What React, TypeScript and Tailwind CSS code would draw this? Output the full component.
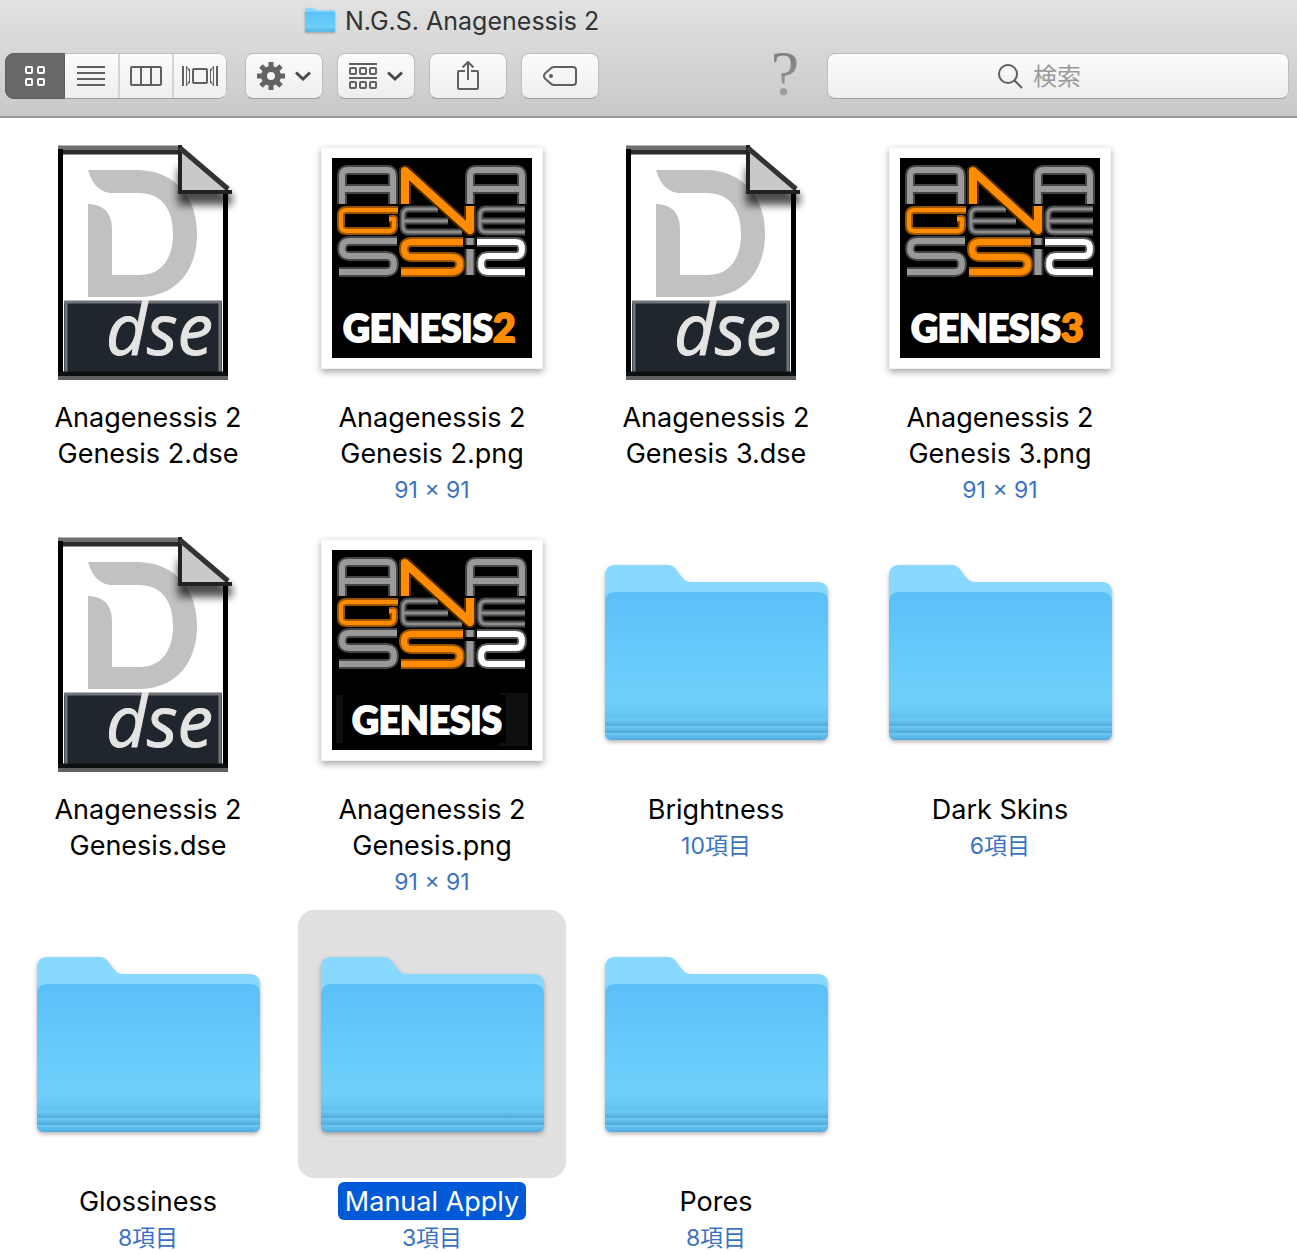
import { useState } from 'react';

type Kind = 'dse' | 'png' | 'folder';

interface Item {
  lines: string[];
  kind: Kind;
  info?: string;
  digit?: string;
}

const items: Item[] = [
  { lines: ['Anagenessis 2', 'Genesis 2.dse'], kind: 'dse' },
  { lines: ['Anagenessis 2', 'Genesis 2.png'], kind: 'png', info: '91 × 91', digit: '2' },
  { lines: ['Anagenessis 2', 'Genesis 3.dse'], kind: 'dse' },
  { lines: ['Anagenessis 2', 'Genesis 3.png'], kind: 'png', info: '91 × 91', digit: '3' },
  { lines: ['Anagenessis 2', 'Genesis.dse'], kind: 'dse' },
  { lines: ['Anagenessis 2', 'Genesis.png'], kind: 'png', info: '91 × 91' },
  { lines: ['Brightness'], kind: 'folder', info: '10項目' },
  { lines: ['Dark Skins'], kind: 'folder', info: '6項目' },
  { lines: ['Glossiness'], kind: 'folder', info: '8項目' },
  { lines: ['Manual Apply'], kind: 'folder', info: '3項目' },
  { lines: ['Pores'], kind: 'folder', info: '8項目' },
];

const FolderIcon = ({ className }: { className: string }) => (
  <svg viewBox="0 0 223 175" preserveAspectRatio="none" className={className} aria-hidden="true">
    <defs>
      <linearGradient id="folderFront" x1="0" y1="0" x2="0" y2="1">
        <stop offset="0" stopColor="#5bc0f8" />
        <stop offset="0.45" stopColor="#67cafa" />
        <stop offset="0.75" stopColor="#70d0fa" />
        <stop offset="0.86" stopColor="#62c1f0" />
        <stop offset="1" stopColor="#62c1f0" />
      </linearGradient>
      <linearGradient id="folderStripe" x1="0" y1="0" x2="0" y2="1">
        <stop offset="0" stopColor="#72c8f3" />
        <stop offset="1" stopColor="#4cacdf" />
      </linearGradient>
    </defs>
    <path d="M0 40V11Q0 0 11 0H63C74 0 74 17 86 17H212Q223 17 223 28V40Z" fill="#89d8ff" />
    <path d="M0 37Q0 27 11 27H212Q223 27 223 37V168Q223 175 216 175H7Q0 175 0 168Z" fill="url(#folderFront)" />
    <path d="M0 154H223V161H0Z" fill="url(#folderStripe)" />
    <path d="M0 161H223V168H0Z" fill="url(#folderStripe)" />
    <path d="M0 168H223Q223 175 216 175H7Q0 175 0 168Z" fill="url(#folderStripe)" />
  </svg>
);

const DseIcon = () => (
  <svg width="180" height="240" viewBox="0 -5 180 240" aria-hidden="true">
    <defs>
      <filter id="foldShadow" x="-50%" y="-50%" width="200%" height="200%">
        <feGaussianBlur stdDeviation="4" />
      </filter>
    </defs>
    <path d="M0 1H124L170 45V235H0Z" fill="#fff" />
    <path d="M30 25H82C118 27 139 52 139 89C139 126 118 150 85 152H30V59Q54 60 54 84V130H82C104 130 115 112 115 90C115 65 105 48 80 48H52Q36 46 30 25Z" fill="#c1c1c1" />
    <path d="M120 22V60H174V50Z" fill="#000" opacity="0.7" filter="url(#foldShadow)" />
    <path d="M6 156H164V230H6Z" fill="#20262d" />
    <path d="M6 157H164M8 157V228M162 157V228" stroke="#70757a" strokeWidth="3" fill="none" />
    <path d="M0 2.5H124" stroke="#707070" strokeWidth="4" />
    <path d="M0 7H124" stroke="#2b2b2b" strokeWidth="5" />
    <path d="M2.5 4V231M167.5 44V231" stroke="#000" strokeWidth="5" />
    <path d="M0 229H170" stroke="#0c0f12" strokeWidth="5" />
    <path d="M0 233H170" stroke="#606060" strokeWidth="4" />
    <path d="M122 3V47H171Z" fill="#c9c9c9" />
    <path d="M122 0V47H174" stroke="#222" strokeWidth="4" fill="none" />
    <path d="M122 3L170 44" stroke="#333" strokeWidth="5" />
    <text x="48" y="210" fill="#e4e4e4" stroke="#e4e4e4" strokeWidth="1" fontFamily="'Open Sans', sans-serif" fontStyle="italic" fontSize="71">dse</text>
  </svg>
);

interface StrokeProps {
  d: string;
  color: string;
  edge: string;
  width: number;
}

const LogoStroke = ({ d, color, edge, width }: StrokeProps) => (
  <g fill="none" strokeLinejoin="round">
    <path d={d} stroke={edge} strokeWidth={width + 4} />
    <path d={d} stroke={color} strokeWidth={width} />
  </g>
);

const PngThumb = ({ digit }: { digit?: string }) => (
  <div className="mb-1 border border-black/5 bg-white p-[10px] shadow-[0_3px_7px_rgba(0,0,0,0.35)]">
    <svg width="200" height="200" viewBox="0 0 200 200" aria-hidden="true">
      <path d="M0 0H200V200H0Z" fill="#000" />
      <LogoStroke d="M10 46V18Q10 12 16 12H55Q61 12 61 18V46M10 31H61" color="#999" edge="#444" width={6} />
      <LogoStroke d="M138 46V18Q138 12 144 12H184Q190 12 190 18V46M138 31H190" color="#999" edge="#444" width={6} />
      <LogoStroke d="M65 83H18Q10 83 10 91Q10 98 18 98H54Q62 98 62 106Q62 114 54 114H7" color="#999" edge="#444" width={6} />
      <LogoStroke d="M106 51H77Q71 51 71 57V68Q71 74 77 74H130M71 63H116" color="#8c8c8c" edge="#484848" width={3} />
      <LogoStroke d="M193 51H154Q148 51 148 57V68Q148 74 154 74H193M148 63H193" color="#8c8c8c" edge="#484848" width={3} />
      <LogoStroke d="M66 52H15Q9 52 9 57V68Q9 73 15 73H57Q62 73 62 68V61H57" color="#ff8c00" edge="#9a5500" width={4} />
      <LogoStroke d="M131 84H80Q72 84 72 91Q72 99 80 99H119Q128 99 128 106Q128 114 119 114H69" color="#ff8c00" edge="#9a5500" width={6} />
      <LogoStroke d="M73 46V13L138 72V48" color="#ff8c00" edge="#4a2a00" width={8} />
      <LogoStroke d="M138 80V87M138 91V117" color="#999" edge="#333" width={7} />
      <LogoStroke d="M145 84H184Q190 84 190 91Q190 98 184 98H156Q149 98 149 106Q149 114 156 114H193" color="#fff" edge="#555" width={6} />
      {!digit && <path d="M4 145H11V193H4ZM167 143H196V196H167V193H174V145H167Z" fill="#0e1010" />}
      <text
        x={digit ? 11 : 20}
        y="184"
        fill="#fff"
        stroke="#fff"
        strokeWidth="2"
        fontFamily="Lato, sans-serif"
        fontWeight="900"
        fontSize="37"
      >
        GENESIS{digit && <tspan fill="#ff8c00" stroke="#ff8c00" fontSize="39">{digit}</tspan>}
      </text>
    </svg>
  </div>
);

const Chevron = () => (
  <svg width="16" height="10" viewBox="0 0 16 10" fill="none" stroke="#4a4a4a" strokeWidth="3" aria-hidden="true">
    <path d="M1 1.5L8 8L15 1.5" />
  </svg>
);

const ToolButton = ({ label, children }: { label: string; children: React.ReactNode }) => (
  <button
    aria-label={label}
    className="flex h-[46px] w-[78px] shrink-0 items-center justify-center gap-[10px] rounded-lg border border-[#bdbdbd] border-b-[#a0a0a0] bg-linear-to-b from-[#fcfcfc] to-[#eeeeee]"
  >
    {children}
  </button>
);

const Toolbar = () => (
  <div className="flex items-center pr-2 pl-[5px]">
    <div className="flex h-[46px] w-[222px] shrink-0 overflow-hidden rounded-lg bg-linear-to-b from-[#fcfcfc] to-[#eeeeee]">
      <button aria-label="Icon view" className="flex w-[60px] items-center justify-center rounded-l-lg border border-[#5c5c5c] bg-[#686866]">
        <svg width="20" height="20" fill="none" stroke="#fff" strokeWidth="2" aria-hidden="true">
          <rect x="1" y="1" width="6" height="6" rx="1" />
          <rect x="13" y="1" width="6" height="6" rx="1" />
          <rect x="1" y="13" width="6" height="6" rx="1" />
          <rect x="13" y="13" width="6" height="6" rx="1" />
        </svg>
      </button>
      <div className="flex flex-1 rounded-r-lg border border-l-0 border-[#bdbdbd] border-b-[#a0a0a0]">
        <button aria-label="List view" className="flex flex-1 items-center justify-center">
          <svg width="28" height="20" stroke="#606060" strokeWidth="2" aria-hidden="true">
            <path d="M0 1H28M0 7H28M0 13H28M0 19H28" />
          </svg>
        </button>
        <button aria-label="Column view" className="flex w-14 items-center justify-center border-x-2 border-[#d4d4d4]">
          <svg width="32" height="20" fill="none" stroke="#606060" strokeWidth="2" aria-hidden="true">
            <rect x="1" y="1" width="30" height="18" rx="1" />
            <path d="M11 1V19M21 1V19" />
          </svg>
        </button>
        <button aria-label="Cover flow view" className="flex flex-1 items-center justify-center">
          <svg width="36" height="20" fill="none" stroke="#606060" aria-hidden="true">
            <path d="M1 0V20M35 0V20" strokeWidth="2" />
            <path d="M4.5 0V20M31.5 0V20" strokeWidth="1" />
            <path d="M4.5 0L8 4L6.5 5ZM4.5 20L8 16L6.5 15ZM31.5 0L28 4L29.5 5ZM31.5 20L28 16L29.5 15Z" fill="#606060" stroke="none" />
            <path d="M7.5 3V17M28.5 3V17" strokeWidth="1" />
            <rect x="11" y="3" width="14" height="14" rx="1" strokeWidth="2" />
          </svg>
        </button>
      </div>
    </div>

    <div className="ml-[18px] flex shrink-0 gap-[14px]">
      <ToolButton label="Action">
        <svg width="28" height="28" viewBox="-14 -14 28 28" aria-hidden="true">
          <g fill="none" stroke="#636363">
            <circle r="7" strokeWidth="6" />
            <path d="M0 -14V-9M0 14V9M-14 0H-9M14 0H9M-10 -10L-6 -6M10 10L6 6M-10 10L-6 6M10 -10L6 -6" strokeWidth="5" />
          </g>
        </svg>
        <Chevron />
      </ToolButton>
      <ToolButton label="Arrange">
        <svg width="28" height="26" fill="none" stroke="#606060" strokeWidth="2" aria-hidden="true">
          <path d="M0 1H28M0 15H28" />
          <rect x="1" y="5" width="6" height="6" rx="1" />
          <rect x="11" y="5" width="6" height="6" rx="1" />
          <rect x="21" y="5" width="6" height="6" rx="1" />
          <rect x="1" y="19" width="6" height="6" rx="1" />
          <rect x="11" y="19" width="6" height="6" rx="1" />
          <rect x="21" y="19" width="6" height="6" rx="1" />
        </svg>
        <Chevron />
      </ToolButton>
      <ToolButton label="Share">
        <svg width="22" height="32" fill="none" stroke="#606060" strokeWidth="2" aria-hidden="true">
          <path d="M8 11H2Q1 11 1 12V28Q1 29 2 29H20Q21 29 21 28V12Q21 11 20 11H14M11 2V20M5.5 7.5L11 2L16.5 7.5" />
        </svg>
      </ToolButton>
      <ToolButton label="Tags">
        <svg width="34" height="20" fill="none" stroke="#606060" strokeWidth="2" aria-hidden="true">
          <path d="M11 1H30Q33 1 33 4V16Q33 19 30 19H11Q9 19 7 17L2 12.5Q0 10 2 7.5L7 3Q9 1 11 1Z" />
          <circle cx="8" cy="10" r="2" fill="#606060" stroke="none" />
        </svg>
      </ToolButton>
    </div>

    <button aria-label="Help" className="ml-auto flex h-[46px] w-11 shrink-0 items-center justify-center bg-linear-to-b from-[#7c7e7e] to-[#a2a4a4] bg-clip-text pb-1 font-['Liberation_Serif',serif] text-[64px] leading-[42px] text-transparent">
      ?
    </button>

    <label className="ml-5 flex h-[46px] w-[462px] items-center justify-center gap-[10px] rounded-lg border border-[#bdbdbd] border-b-[#a0a0a0] bg-linear-to-b from-[#fcfcfc] to-[#eeeeee]">
      <svg width="25" height="25" fill="none" stroke="#606060" strokeWidth="2" aria-hidden="true">
        <circle cx="10" cy="10" r="9" />
        <path d="M16.5 16.5L24 24" />
      </svg>
      <input
        type="search"
        aria-label="検索"
        placeholder="検索"
        className="w-[85px] bg-transparent pt-0.5 text-2xl outline-none placeholder:text-[#9a9a9a]"
      />
    </label>
  </div>
);

export default function App() {
  const [selected, setSelected] = useState(9);

  return (
    <div className="bg-white font-[Inter,'Noto_Sans_CJK_JP',sans-serif] text-black">
      <header className="border-b-2 border-[#989898] bg-linear-to-b from-[#e2e2e2] to-[#c9c9c9] pb-[17px]">
        <div className="flex h-[53px] items-start gap-[10px] pt-1 pl-[305px]">
          <FolderIcon className="mt-1 h-[24px] w-[30px] drop-shadow-[0_1px_1px_rgba(0,0,0,0.3)]" />
          <h1 className="text-[25px] leading-[34px] text-[#333]">N.G.S. Anagenessis 2</h1>
        </div>
        <Toolbar />
      </header>

      <main className="px-[14px] pt-2">
        <ul className="grid grid-cols-[repeat(auto-fill,268px)] gap-x-4 gap-y-3">
          {items.map((item, i) => (
            <li key={i}>
              <button className="flex w-full flex-col items-center" onClick={() => setSelected(i)}>
                <span className={`flex size-[268px] items-center justify-center rounded-2xl ${selected === i ? 'bg-[#e0e0e0]' : ''}`}>
                  {item.kind === 'dse' && <DseIcon />}
                  {item.kind === 'png' && <PngThumb digit={item.digit} />}
                  {item.kind === 'folder' && <FolderIcon className="h-[175px] w-[223px] drop-shadow-[0_2px_2px_rgba(0,0,0,0.3)]" />}
                </span>
                <span className={`mt-1 rounded-md px-[7px] pt-0.5 text-[27px] leading-9 ${selected === i ? 'bg-[#0059d6] text-white' : ''}`}>
                  {item.lines.map((line) => (
                    <span key={line} className="block">{line}</span>
                  ))}
                </span>
                {item.info && <span className="mt-0.5 text-[23px] leading-8 text-[#3a72c4]">{item.info}</span>}
              </button>
            </li>
          ))}
        </ul>
      </main>
    </div>
  );
}
